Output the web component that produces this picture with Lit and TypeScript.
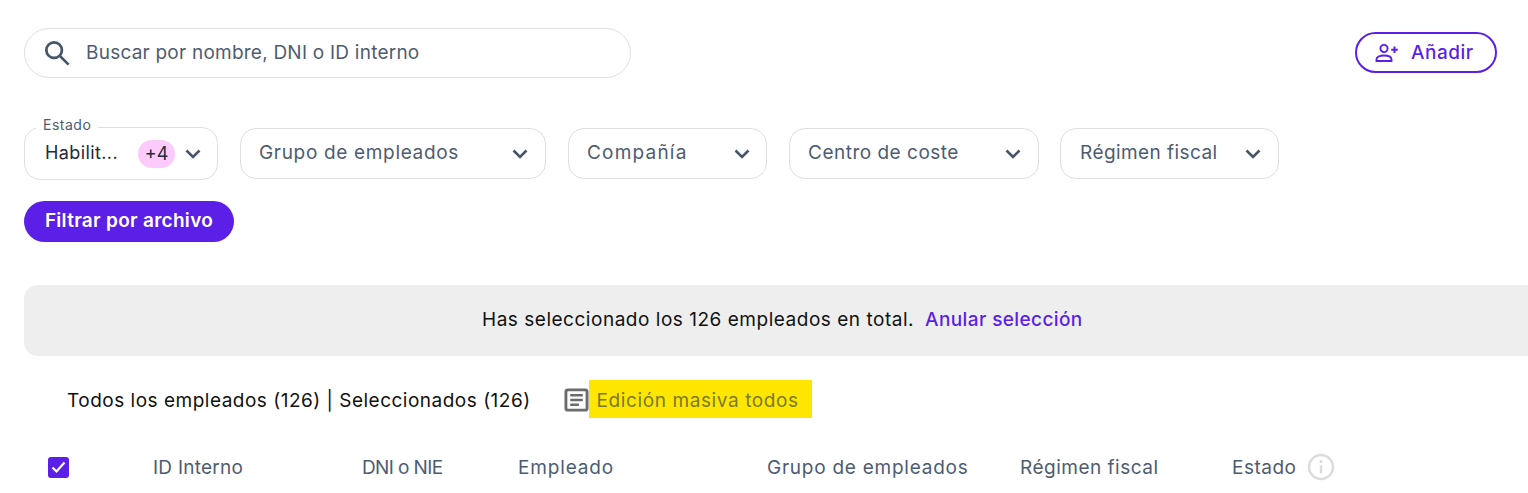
import { LitElement, html, css } from "lit";
import { customElement } from "lit/decorators.js";

const chevron = html`<svg class="chev" width="18" height="12" viewBox="0 0 18 12" fill="none"><path d="M2.500 2.500 9 9l6.500-6.500" stroke="#475569" stroke-width="2.600"/></svg>`;

@customElement("app-root")
export class AppRoot extends LitElement {
  static styles = css`
    :host { display: block; width: 1528px; height: 493px; overflow: hidden; box-sizing: border-box; padding: 28px 31px 0 24px; font-family: Inter, "Liberation Sans", sans-serif; font-size: 19px; color: #4d5c73; background: #fff; }
    * { box-sizing: border-box; }
    .top { display: flex; justify-content: space-between; align-items: center; height: 50px; }
    .search { width: 607px; height: 50px; border: 1px solid #dcdfe3; border-radius: 25px; display: flex; align-items: center; padding: 0 0 2px 17px; gap: 14px; letter-spacing: 0.23px; }
    .search svg { margin-top: 2px; }
    .add { width: 142px; height: 41px; margin-bottom: 1px; border: 2px solid #5b1fe8; border-radius: 21px; display: flex; align-items: center; padding: 0 0 0 18px; gap: 12px; color: #5b1fe8; font-weight: 500; letter-spacing: 0.5px; }
    .filters { display: flex; align-items: center; margin-top: 49px; height: 53px; }
    .sel { height: 51px; margin-right: 22px; border: 1px solid #dcdfe3; border-radius: 16px; display: flex; align-items: center; justify-content: space-between; padding: 0 16px 2px 18px; }
    .sel svg { margin-top: 2px; }
    .estado { position: relative; width: 194px; height: 53px; padding: 0 15px 2px 20px; color: #1f2937; }
    .legend { position: absolute; left: 11px; top: -12px; padding: 0 7px; background: #fff; font-size: 14px; line-height: 18px; color: #4d5c73; letter-spacing: 0.5px; }
    .val { flex: 1; font-size: 18px; letter-spacing: 0.4px; }
    .badge { width: 37px; height: 28px; border-radius: 14px; background: #fccbfc; display: flex; align-items: center; justify-content: center; margin: 2px 9px 0 0; color: #1f2937; font-size: 18px; }
    .g { width: 306px; letter-spacing: 0.67px; }
    .c { width: 199px; letter-spacing: 1.2px; padding-right: 15px; }
    .cc { width: 250px; letter-spacing: 0.5px; }
    .r { width: 219px; letter-spacing: 0.43px; margin-right: 0; padding-left: 19px; }
    .centro { margin-right: 21px; }
    .file { margin-top: 21px; width: 210px; height: 41px; border-radius: 21px; background: #5b1fe8; color: #fff; font-weight: 600; letter-spacing: 0.3px; display: flex; align-items: center; justify-content: center; padding-bottom: 2px; }
    .banner { margin-top: 43px; width: 1540px; height: 71px; border-radius: 14px; background: #eeeeee; display: flex; align-items: center; padding: 0 0 2px 458px; color: #111; gap: 11px; letter-spacing: 0.52px; }
    .banner a { color: #5b1fe8; font-weight: 500; letter-spacing: 0.4px; }
    .summary { display: flex; align-items: center; margin-top: 24px; height: 38px; padding-left: 43px; color: #111; letter-spacing: 0.5px; }
    .count { padding-top: 2px; }
    .bulk { display: flex; align-items: center; margin-left: 33px; }
    .bulk svg { margin-top: 2px; }
    .mark { height: 38px; width: 223px; background: #ffe600; color: #7a7a2e; display: flex; align-items: center; padding: 2px 0 0 8px; letter-spacing: 0.6px; }
    .head { display: grid; grid-template-columns: 105px 209px 156px 249px 253px 212px auto; align-items: center; margin-top: 35px; margin-left: 24px; height: 22px; justify-content: start; }
    .cb { width: 21px; height: 21px; border-radius: 3px; background: #5b1fe8; display: flex; align-items: center; justify-content: center; }
    .l1 { letter-spacing: 0.25px; }
    .l2 { letter-spacing: -0.6px; }
    .l3 { letter-spacing: 0.85px; }
    .l4 { letter-spacing: 0.75px; }
    .l5 { letter-spacing: 0.5px; }
    .st { display: flex; align-items: center; gap: 11px; letter-spacing: 0.5px; }
  `;
  render() {
    return html`
      <div class="top">
        <div class="search">
          <svg width="30" height="30" viewBox="0 0 24 24" fill="none" stroke="#475569"><circle cx="9.700" cy="9.700" r="6.200" stroke-width="2.200"/><path d="m14.500 14.500 6.800 6.800" stroke-width="2.200"/></svg>
          <span>Buscar por nombre, DNI o ID interno</span>
        </div>
        <div class="add">
          <svg width="24" height="20" viewBox="0 0 24 20" fill="none" stroke="#5b1fe8" stroke-width="1.900"><circle cx="9" cy="5.500" r="3.600"/><path d="M1.500 18v-1.500c0-2.500 3-4 7.500-4s7.500 1.500 7.500 4V18Z"/><path d="M19.500 3.500v6.500M16.200 6.800h6.600" stroke-width="2"/></svg>
          <span>Añadir</span>
        </div>
      </div>
      <div class="filters">
        <div class="sel estado"><span class="legend">Estado</span><span class="val">Habilit...</span><span class="badge">+4</span>${chevron}</div>
        <div class="sel g">Grupo de empleados ${chevron}</div>
        <div class="sel c">Compañía ${chevron}</div>
        <div class="sel cc centro">Centro de coste ${chevron}</div>
        <div class="sel r">Régimen fiscal ${chevron}</div>
      </div>
      <div class="file">Filtrar por archivo</div>
      <div class="banner"><span>Has seleccionado los 126 empleados en total.</span><a>Anular selección</a></div>
      <div class="summary">
        <span class="count">Todos los empleados (126) | Seleccionados (126)</span>
        <div class="bulk">
          <svg width="25" height="26" viewBox="0 0 26 26" fill="none" stroke="#6b6b6b"><rect x="2" y="2.500" width="22" height="21" rx="2" stroke-width="3"/><path d="M6.500 8h13M6.500 13h13M6.500 18h9" stroke-width="2.500"/></svg>
          <span class="mark">Edición masiva todos</span>
        </div>
      </div>
      <div class="head">
        <div class="cb"><svg width="15" height="13" viewBox="0 0 15 13" fill="none"><path d="m1.500 6.500 4 4 8-9" stroke="#fff" stroke-width="2.200"/></svg></div>
        <span class="l1">ID Interno</span><span class="l2">DNI o NIE</span><span class="l3">Empleado</span><span class="l4">Grupo de empleados</span><span class="l5">Régimen fiscal</span>
        <div class="st"><span>Estado</span>
          <svg width="28" height="28" viewBox="0 0 28 28" fill="none"><circle cx="14" cy="14" r="12" stroke="#dcdcdc" stroke-width="2.500"/><path d="M14 12.500v8" stroke="#dcdcdc" stroke-width="2.400"/><circle cx="14" cy="8.500" r="1.500" fill="#dcdcdc"/></svg>
        </div>
      </div>
    `;
  }
}
